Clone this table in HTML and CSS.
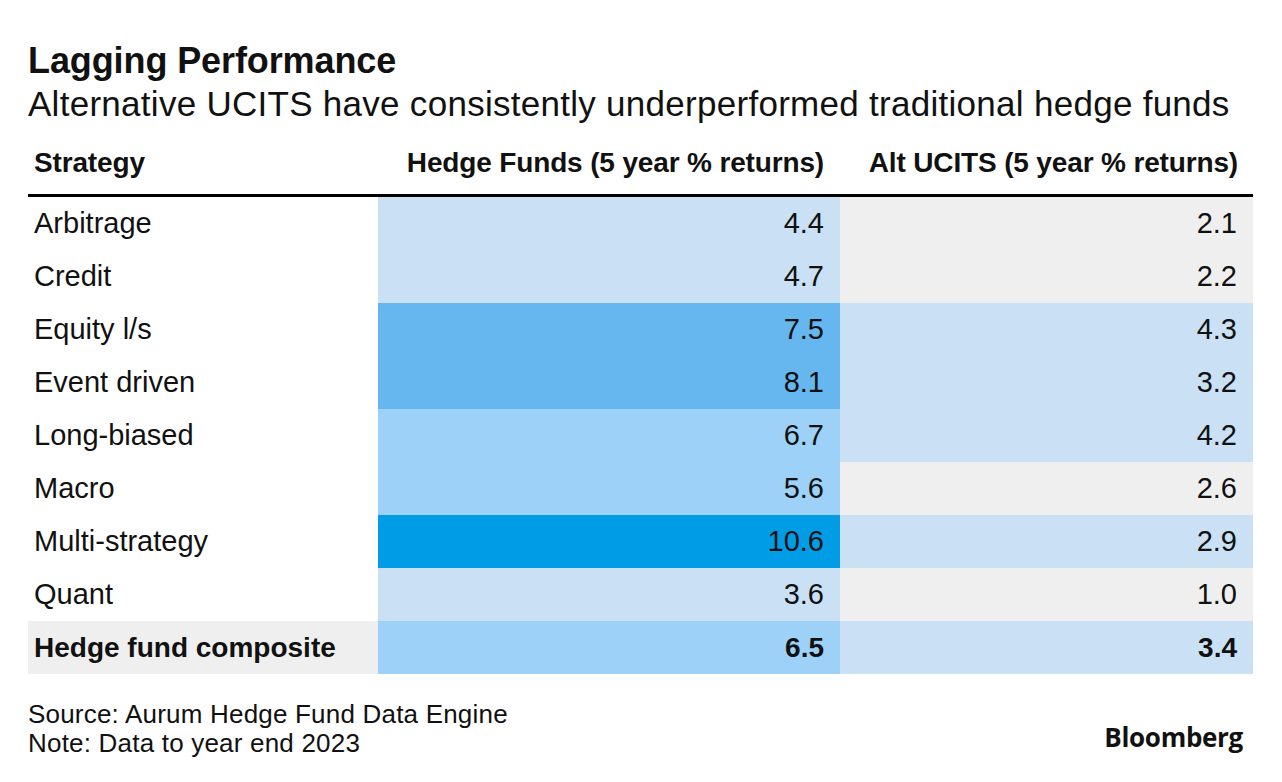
FILE: index.html
```html
<!DOCTYPE html>
<html>
<head>
<meta charset="utf-8">
<link rel="stylesheet" href="styles.css">
</head>
<body>
<div class="page">
  <h1 class="title">Lagging Performance</h1>
  <p class="subtitle">Alternative UCITS have consistently underperformed traditional hedge funds</p>
  <div class="table">
    <div class="row head">
      <div class="cell name">Strategy</div>
      <div class="cell num">Hedge Funds (5 year % returns)</div>
      <div class="cell num">Alt UCITS (5 year % returns)</div>
    </div>
    <div class="row">
      <div class="cell name">Arbitrage</div>
      <div class="cell num c1">4.4</div>
      <div class="cell num g">2.1</div>
    </div>
    <div class="row">
      <div class="cell name">Credit</div>
      <div class="cell num c1">4.7</div>
      <div class="cell num g">2.2</div>
    </div>
    <div class="row">
      <div class="cell name">Equity l/s</div>
      <div class="cell num c3">7.5</div>
      <div class="cell num c1">4.3</div>
    </div>
    <div class="row">
      <div class="cell name">Event driven</div>
      <div class="cell num c3">8.1</div>
      <div class="cell num c1">3.2</div>
    </div>
    <div class="row">
      <div class="cell name">Long-biased</div>
      <div class="cell num c2">6.7</div>
      <div class="cell num c1">4.2</div>
    </div>
    <div class="row">
      <div class="cell name">Macro</div>
      <div class="cell num c2">5.6</div>
      <div class="cell num g">2.6</div>
    </div>
    <div class="row">
      <div class="cell name">Multi-strategy</div>
      <div class="cell num c4">10.6</div>
      <div class="cell num c1">2.9</div>
    </div>
    <div class="row">
      <div class="cell name">Quant</div>
      <div class="cell num c1">3.6</div>
      <div class="cell num g">1.0</div>
    </div>
    <div class="row total">
      <div class="cell name g">Hedge fund composite</div>
      <div class="cell num c2">6.5</div>
      <div class="cell num c1">3.4</div>
    </div>
  </div>
  <div class="footer">
    <div class="notes">
      <div>Source: Aurum Hedge Fund Data Engine</div>
      <div>Note: Data to year end 2023</div>
    </div>
    <div class="logo">Bloomberg</div>
  </div>
</div>
</body>
</html>
```

FILE: styles.css
```css
html, body {
  margin: 0;
  padding: 0;
  background: #ffffff;
}
body {
  font-family: "Liberation Sans", Arial, sans-serif;
  color: #111111;
}
.page {
  width: 1225px;
  padding: 42px 0 0 28px;
}
.title {
  margin: 0;
  font-size: 36px;
  line-height: 38px;
  font-weight: 700;
  letter-spacing: -0.1px;
}
.subtitle {
  margin: 4px 0 0 0;
  font-size: 35px;
  line-height: 40px;
  font-weight: 400;
  letter-spacing: 0.28px;
  white-space: nowrap;
}
.table {
  display: flex;
  flex-direction: column;
}
.row {
  display: grid;
  grid-template-columns: 350px 462px 413px;
  height: 53px;
}
.row.head {
  height: 70px;
  border-bottom: 3px solid #000000;
}
.cell {
  display: flex;
  align-items: center;
  font-size: 29px;
  padding: 0 6px;
}
.cell.num {
  justify-content: flex-end;
  padding: 0 16px;
}
.head .cell {
  font-weight: 700;
  font-size: 28px;
  letter-spacing: -0.15px;
  padding-top: 8px;
}
.head .cell.num:last-child {
  padding-right: 15px;
}
.total .cell {
  font-weight: 700;
  font-size: 28px;
}
.c1 { background: #c9e0f5; }
.c2 { background: #9dd1f8; }
.c3 { background: #66b6ef; }
.c4 { background: #009de6; }
.g { background: #efefef; }
.footer {
  margin-top: 26px;
  display: flex;
  justify-content: space-between;
  align-items: flex-end;
}
.notes {
  font-size: 26px;
  line-height: 29px;
  letter-spacing: 0.2px;
}
.logo {
  font-family: "Open Sans", "Liberation Sans", sans-serif;
  font-weight: 700;
  font-size: 26px;
  line-height: 30px;
  letter-spacing: -0.3px;
  margin-right: 10px;
  margin-bottom: 6px;
}
```
